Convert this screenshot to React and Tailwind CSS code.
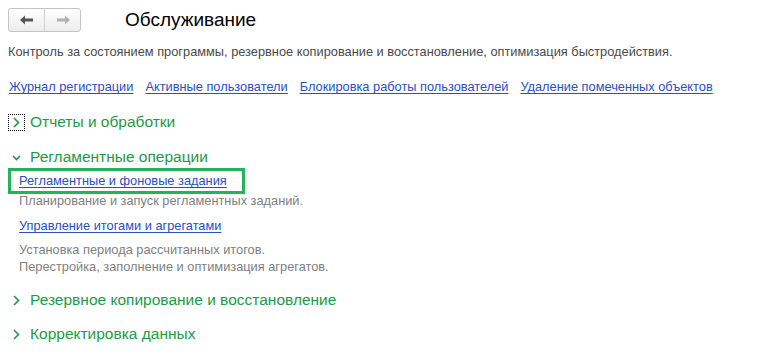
import React from "react";

const font = { fontFamily: '"Liberation Sans", Arial, sans-serif' };

function Chevron({ open }) {
  return (
    <svg width="11" height="11" viewBox="0 0 11 11" className="shrink-0">
      {open ? (
        <path d="M2 4 L5.5 7.5 L9 4" fill="none" stroke="#1d9a45" strokeWidth="1.6" />
      ) : (
        <path d="M3 1 L7.5 5.5 L3 10" fill="none" stroke="#1d9a45" strokeWidth="1.6" />
      )}
    </svg>
  );
}

function Section({ title, open, focused, className = "" }) {
  return (
    <div className={`flex items-center h-5 pl-2 ${className}`}>
      <div
        className={`w-[17px] h-[17px] flex items-center justify-center ${
          focused ? "border border-dotted border-black" : ""
        }`}
      >
        <Chevron open={open} />
      </div>
      <span className="ml-[5px] text-[15.5px] text-[#1d9a45] whitespace-nowrap">{title}</span>
    </div>
  );
}

function Link({ children }) {
  return <a className="text-[#2a4fbf] underline underline-offset-2 cursor-pointer whitespace-nowrap">{children}</a>;
}

export default function App() {
  const links = [
    "Журнал регистрации",
    "Активные пользователи",
    "Блокировка работы пользователей",
    "Удаление помеченных объектов",
  ];

  return (
    <div className="w-[771px] h-[356px] bg-white overflow-hidden" style={font}>
      <div className="flex items-center h-[38px] pt-[2px]">
        <div className="ml-2 flex h-6 w-[73px] rounded-[3px] border border-[#c4c4c4] bg-gradient-to-b from-white to-[#ececec]">
          <div className="flex-1 flex items-center justify-center border-r border-[#d0d0d0]">
            <svg width="14" height="10" viewBox="0 0 14 10">
              <path d="M0 5 L5 0.5 L5 3.5 L13 3.5 L13 6.5 L5 6.5 L5 9.5 Z" fill="#555" />
            </svg>
          </div>
          <div className="flex-1 flex items-center justify-center">
            <svg width="14" height="10" viewBox="0 0 14 10">
              <path d="M14 5 L9 0.5 L9 3.5 L1 3.5 L1 6.5 L9 6.5 L9 9.5 Z" fill="#b0b0b0" />
            </svg>
          </div>
        </div>
        <h1 className="ml-[44px] text-[19px] text-black">Обслуживание</h1>
      </div>

      <div className="mt-1 h-5 flex items-center pl-2 text-[12.8px] text-[#4a4a4a] whitespace-nowrap">
        Контроль за состоянием программы, резервное копирование и восстановление, оптимизация быстродействия.
      </div>

      <div className="mt-[15px] h-5 flex items-center gap-[12px] pl-[9px] text-[12.8px]">
        {links.map((l) => (
          <Link key={l}>{l}</Link>
        ))}
      </div>

      <Section title="Отчеты и обработки" focused className="mt-[15px]" />
      <Section title="Регламентные операции" open className="mt-[15px]" />

      <div className="mt-px ml-2 w-[237px] h-[26px] border-[3px] border-[#22b35b] flex items-center pl-2 text-[12.8px]">
        <Link>Регламентные и фоновые задания</Link>
      </div>
      <div className="h-[14px] flex items-center pl-[19px] text-[12.8px] text-[#7f7f7f]">
        Планирование и запуск регламентных заданий.
      </div>

      <div className="mt-[11px] h-[14px] flex items-center pl-[19px] text-[12.8px]">
        <Link>Управление итогами и агрегатами</Link>
      </div>
      <div className="mt-2 pl-[19px] text-[12.8px] leading-[17px] text-[#7f7f7f]">
        <div>Установка периода рассчитанных итогов.</div>
        <div>Перестройка, заполнение и оптимизация агрегатов.</div>
      </div>

      <Section title="Резервное копирование и восстановление" className="mt-[15px]" />
      <Section title="Корректировка данных" className="mt-[14px]" />
    </div>
  );
}
